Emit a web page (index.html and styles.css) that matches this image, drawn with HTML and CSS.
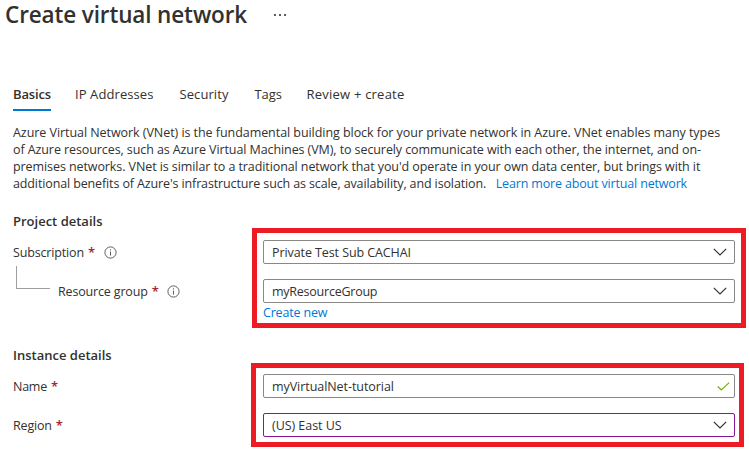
FILE: index.html
```html
<!DOCTYPE html>
<html lang="en">
<head>
<meta charset="utf-8">
<title>Create virtual network</title>
<link rel="stylesheet" href="styles.css">
</head>
<body>
<header class="header">
  <h1 class="title">Create virtual network</h1>
  <span class="more"><i></i><i></i><i></i></span>
</header>
<nav class="tabs">
  <a class="tab active">Basics</a>
  <a class="tab ip">IP Addresses</a>
  <a class="tab security">Security</a>
  <a class="tab tags">Tags</a>
  <a class="tab review">Review + create</a>
</nav>
<p class="intro">
  <span class="line l1">Azure Virtual Network (VNet) is the fundamental building block for your private network in Azure. VNet enables many types</span>
  <span class="line l2">of Azure resources, such as Azure Virtual Machines (VM), to securely communicate with each other, the internet, and on-</span>
  <span class="line l3">premises networks. VNet is similar to a traditional network that you'd operate in your own data center, but brings with it</span>
  <span class="line l4"><span>additional benefits of Azure's infrastructure such as scale, availability, and isolation.</span><a class="link learn">Learn more about virtual network</a></span>
</p>
<section class="section project">
  <div class="labels">
    <h2 class="heading">Project details</h2>
    <div class="label"><span class="subscription">Subscription</span><b class="req">*</b>
      <svg class="info" viewBox="0 0 13 13"><circle cx="6.5" cy="6.5" r="5.6"/><path d="M6.5 5.6v4M6.5 3.3v1.2"/></svg></div>
    <div class="label child"><span class="elbow"></span><span class="group">Resource group</span><b class="req">*</b>
      <svg class="info" viewBox="0 0 13 13"><circle cx="6.5" cy="6.5" r="5.6"/><path d="M6.5 5.6v4M6.5 3.3v1.2"/></svg></div>
  </div>
  <div class="frame">
    <div class="field"><span class="v1">Private Test Sub CACHAI</span><svg class="chevron" viewBox="0 0 14 8"><path d="M.8.8 7 7 13.2.8"/></svg></div>
    <div class="field"><span class="v2">myResourceGroup</span><svg class="chevron" viewBox="0 0 14 8"><path d="M.8.8 7 7 13.2.8"/></svg></div>
    <a class="link create">Create new</a>
  </div>
</section>
<section class="section instance">
  <div class="labels">
    <h2 class="heading">Instance details</h2>
    <div class="label"><span class="name">Name</span><b class="req">*</b></div>
    <div class="label"><span class="region">Region</span><b class="req">*</b></div>
  </div>
  <div class="frame">
    <div class="field"><span class="v3">myVirtualNet-tutorial</span><svg class="check" viewBox="0 0 13 9"><path d="M.8 4.5 4.3 8 12.2.6"/></svg></div>
    <div class="field focus"><span class="v4">(US) East US</span><svg class="chevron" viewBox="0 0 14 8"><path d="M.8.8 7 7 13.2.8"/></svg></div>
  </div>
</section>
</body>
</html>
```
FILE: styles.css
```css
* { box-sizing: border-box; }
body {
  margin: 0;
  width: 749px;
  height: 454px;
  overflow: hidden;
  background: #fff;
  color: #323130;
  font: 12.5px/17px "Open Sans", "Noto Sans", sans-serif;
  white-space: nowrap;
}
h1, h2, p { margin: 0; }

.header { display: flex; height: 83px; padding-left: 5px; }
.title { width: 268.5px; font-size: 22.5px; line-height: 30px; font-weight: 600; letter-spacing: -.13px; }
.more { display: flex; gap: 3px; padding-top: 14px; }
.more i { width: 2px; height: 2px; background: #605e5c; }

.tabs { display: flex; height: 41px; padding-left: 13px; font-size: 13px; line-height: 22px; }
.tab { height: 28px; }
.active { width: 38px; margin-right: 24px; font-weight: 600; letter-spacing: -.14px; border-bottom: 2px solid #0078d4; }
.ip { width: 104.5px; letter-spacing: .09px; }
.security { width: 75px; letter-spacing: .08px; }
.tags { width: 52px; letter-spacing: -.1px; }
.review { letter-spacing: .22px; }

.intro { height: 86px; padding-left: 13px; }
.line { display: block; }
.l1 { letter-spacing: -.054px; }
.l2 { letter-spacing: -.089px; }
.l3 { letter-spacing: -.086px; }
.l4 { display: flex; gap: 9.5px; letter-spacing: -.126px; }
.link { color: #0078d4; }
.learn { letter-spacing: -.16px; }

.section { display: flex; align-items: flex-start; }
.project { height: 136px; padding-top: 2px; }
.instance { height: 108px; }
.labels { width: 252px; padding-left: 13px; }
.heading { height: 28px; font-size: 13px; line-height: 18px; font-weight: 600; }
.label { display: flex; align-items: center; height: 24px; margin-bottom: 15px; }
.subscription, .group { letter-spacing: -.16px; }
.name { letter-spacing: -.25px; }
.region { letter-spacing: -.17px; }
.req { margin-left: 4px; color: #a4262c; font-size: 13px; font-weight: 600; }
.info { width: 13px; height: 13px; margin-left: 8.5px; fill: none; stroke: #605e5c; stroke-width: 1; }
.elbow { width: 34px; height: 23px; margin: -28px 8px 0 3px; border: solid #a19f9d; border-width: 0 0 1px 1px; }

.frame { border: 5px solid #ed1c24; }
.project .frame { width: 494px; height: 100px; margin-top: 16px; padding: 7px 6px 0; }
.instance .labels { width: 251px; }
.instance .frame { width: 493px; height: 84px; margin-top: 17px; padding: 6px 4px 0 7px; }
.field {
  display: flex;
  align-items: center;
  justify-content: space-between;
  width: 472px;
  height: 24px;
  margin-bottom: 15px;
  padding: 0 7.5px 0 8px;
  border: 1px solid #8a8886;
  border-radius: 2px;
}
.focus { border-color: #881798; }
.chevron { width: 14px; height: 8px; fill: none; stroke: #323130; stroke-width: 1.2; }
.check { width: 13px; height: 9px; margin-right: -3px; fill: none; stroke: #6bb700; stroke-width: 1.2; }
.create { display: block; margin-top: -14px; letter-spacing: -.18px; }
.v1 { letter-spacing: -.085px; }
.v2 { letter-spacing: -.24px; }
.v3 { letter-spacing: -.06px; }
.v4 { letter-spacing: -.05px; }
```
